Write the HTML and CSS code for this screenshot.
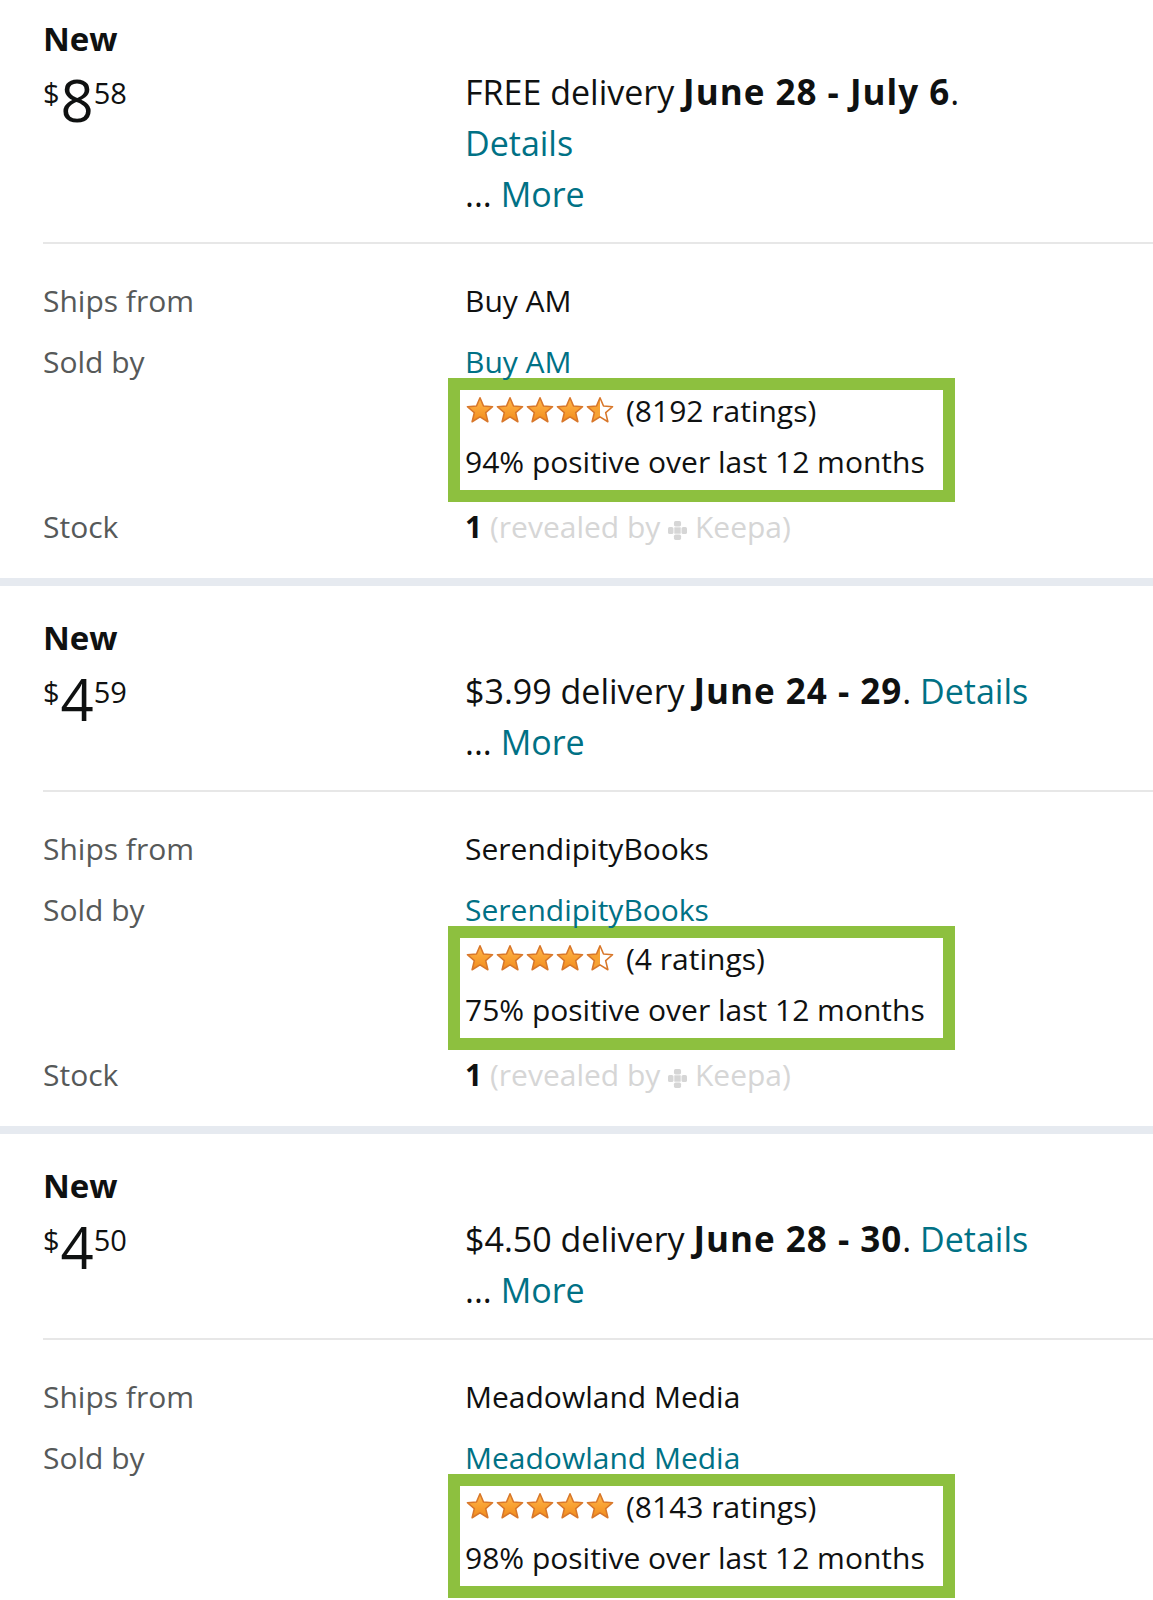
FILE: index.html
```html
<!DOCTYPE html>
<html lang="en">
<head>
    <meta charset="UTF-8">
    <meta name="viewport" content="width=device-width, initial-scale=1.0">
    <title>Other sellers</title>
    <link rel="stylesheet" href="styles.css">
</head>
<body>
<svg class="defs" width="0" height="0" aria-hidden="true">
    <defs>
        <linearGradient id="starFill" x1="0" y1="0" x2="0" y2="1">
            <stop offset="0" stop-color="#ffb74a"/>
            <stop offset="1" stop-color="#f28c1c"/>
        </linearGradient>
        <linearGradient id="starHalf" x1="0" y1="0" x2="1" y2="0">
            <stop offset="0" stop-color="#f7a233"/>
            <stop offset="0.5" stop-color="#f7a233"/>
            <stop offset="0.5" stop-color="#ffffff"/>
            <stop offset="1" stop-color="#ffffff"/>
        </linearGradient>
        <symbol id="star" viewBox="0 0 24 24">
            <polygon points="12,1.4 14.9,8.3 22.4,8.9 16.7,13.8 18.5,21.3 12,17.3 5.5,21.3 7.3,13.8 1.6,8.9 9.1,8.3" fill="url(#starFill)" stroke="#d8772a" stroke-width="1.3" stroke-linejoin="round"/>
        </symbol>
        <symbol id="star-half" viewBox="0 0 24 24">
            <polygon points="12,1.4 14.9,8.3 22.4,8.9 16.7,13.8 18.5,21.3 12,17.3 5.5,21.3 7.3,13.8 1.6,8.9 9.1,8.3" fill="url(#starHalf)" stroke="#d8772a" stroke-width="1.3" stroke-linejoin="round"/>
        </symbol>
        <symbol id="keepa" viewBox="0 0 16 16">
            <rect x="5" y="0" width="6" height="4.6" rx="1.4"/>
            <rect x="5" y="11.4" width="6" height="4.6" rx="1.4"/>
            <rect x="0" y="5" width="4.6" height="6" rx="1.4"/>
            <rect x="11.4" y="5" width="4.6" height="6" rx="1.4"/>
            <rect x="5.3" y="5.3" width="5.4" height="5.4"/>
        </symbol>
    </defs>
</svg>

<!-- offer 1 -->
<div class="offer first">
    <div class="offer-head">
        <div>
            <div class="condition">New</div>
            <div class="price"><span class="price-sym">$</span><span class="price-whole">8</span><span class="price-frac">58</span></div>
        </div>
        <div class="delivery">
            FREE delivery <b>June 28 - July 6</b>.<br>
            <a href="#">Details</a><br>
            ... <a href="#">More</a>
        </div>
    </div>
    <div class="offer-info">
        <div class="info-row ships">
            <span class="label">Ships from</span>
            <span>Buy AM</span>
        </div>
        <div class="info-row">
            <span class="label">Sold by</span>
            <div>
                <a href="#">Buy AM</a>
                <div class="seller-box">
                    <div class="rating-line">
                        <span class="stars">
                            <svg><use href="#star"/></svg><svg><use href="#star"/></svg><svg><use href="#star"/></svg><svg><use href="#star"/></svg><svg><use href="#star-half"/></svg>
                        </span>
                        <span>(8192 ratings)</span>
                    </div>
                    <div class="positive">94% positive over last 12 months</div>
                </div>
            </div>
        </div>
        <div class="info-row">
            <span class="label">Stock</span>
            <span><b>1</b> <span class="keepa">(revealed by <svg class="keepa-icon"><use href="#keepa"/></svg> Keepa)</span></span>
        </div>
    </div>
</div>

<!-- offer 2 -->
<div class="offer">
    <div class="offer-head">
        <div>
            <div class="condition">New</div>
            <div class="price"><span class="price-sym">$</span><span class="price-whole">4</span><span class="price-frac">59</span></div>
        </div>
        <div class="delivery">
            $3.99 delivery <b>June 24 - 29</b>. <a href="#">Details</a><br>
            ... <a href="#">More</a>
        </div>
    </div>
    <div class="offer-info">
        <div class="info-row ships">
            <span class="label">Ships from</span>
            <span>SerendipityBooks</span>
        </div>
        <div class="info-row">
            <span class="label">Sold by</span>
            <div>
                <a href="#">SerendipityBooks</a>
                <div class="seller-box">
                    <div class="rating-line">
                        <span class="stars">
                            <svg><use href="#star"/></svg><svg><use href="#star"/></svg><svg><use href="#star"/></svg><svg><use href="#star"/></svg><svg><use href="#star-half"/></svg>
                        </span>
                        <span>(4 ratings)</span>
                    </div>
                    <div class="positive">75% positive over last 12 months</div>
                </div>
            </div>
        </div>
        <div class="info-row">
            <span class="label">Stock</span>
            <span><b>1</b> <span class="keepa">(revealed by <svg class="keepa-icon"><use href="#keepa"/></svg> Keepa)</span></span>
        </div>
    </div>
</div>

<!-- offer 3 -->
<div class="offer">
    <div class="offer-head">
        <div>
            <div class="condition">New</div>
            <div class="price"><span class="price-sym">$</span><span class="price-whole">4</span><span class="price-frac">50</span></div>
        </div>
        <div class="delivery">
            $4.50 delivery <b>June 28 - 30</b>. <a href="#">Details</a><br>
            ... <a href="#">More</a>
        </div>
    </div>
    <div class="offer-info">
        <div class="info-row ships">
            <span class="label">Ships from</span>
            <span>Meadowland Media</span>
        </div>
        <div class="info-row">
            <span class="label">Sold by</span>
            <div>
                <a href="#">Meadowland Media</a>
                <div class="seller-box">
                    <div class="rating-line">
                        <span class="stars">
                            <svg><use href="#star"/></svg><svg><use href="#star"/></svg><svg><use href="#star"/></svg><svg><use href="#star"/></svg><svg><use href="#star"/></svg>
                        </span>
                        <span>(8143 ratings)</span>
                    </div>
                    <div class="positive">98% positive over last 12 months</div>
                </div>
            </div>
        </div>
        <div class="info-row">
            <span class="label">Stock</span>
            <span><b>1</b> <span class="keepa">(revealed by <svg class="keepa-icon"><use href="#keepa"/></svg> Keepa)</span></span>
        </div>
    </div>
</div>
</body>
</html>
```

FILE: styles.css
```css
body {
    margin: 0;
    font-family: "Open Sans", "Noto Sans", sans-serif;
    color: #0f1111;
    background: #fff;
}

a {
    color: #007185;
    text-decoration: none;
}

.defs {
    position: absolute;
}

.offer {
    padding: 30px 0 35px 43px;
    border-top: 8px solid #e6eaf0;
}

.offer.first {
    padding-top: 17px;
    border-top: none;
}

.offer-head {
    display: grid;
    grid-template-columns: 422px 1fr;
}

.condition {
    font-size: 33px;
    font-weight: 700;
    line-height: 44px;
}

.price {
    display: flex;
    align-items: flex-start;
    margin-top: 10px;
}

.price-sym,
.price-frac {
    font-size: 29px;
    line-height: 29px;
    margin-top: 7px;
}

.price-whole {
    font-size: 58px;
    font-weight: 500;
    line-height: 58px;
    margin-left: 1px;
}

.delivery {
    padding-top: 50px;
    font-size: 34px;
    line-height: 51px;
}

.delivery b {
    font-size: 35px;
    line-height: 1;
    letter-spacing: 1px;
}

.offer-info {
    margin-top: 22px;
    padding-top: 41px;
    border-top: 2px solid #e7e7e7;
}

.info-row {
    display: grid;
    grid-template-columns: 422px 1fr;
    font-size: 30px;
    line-height: 32px;
}

.info-row.ships {
    margin-bottom: 29px;
}

.label {
    color: #565959;
    font-size: 30px;
}

.seller-box {
    width: 507px;
    margin: 0 0 9px -17px;
    padding: 0 12px 8px 5px;
    border: 12px solid #8dc03f;
    box-sizing: border-box;
    line-height: 41px;
    white-space: nowrap;
}

.rating-line {
    display: flex;
    align-items: center;
    gap: 11px;
}

.stars {
    display: flex;
}

.stars svg {
    width: 30px;
    height: 29px;
}

.positive {
    margin-top: 10px;
}

.keepa {
    color: #d6d6d6;
}

.keepa-icon {
    width: 19px;
    height: 19px;
    fill: #d6d6d6;
    vertical-align: -2px;
}
```
